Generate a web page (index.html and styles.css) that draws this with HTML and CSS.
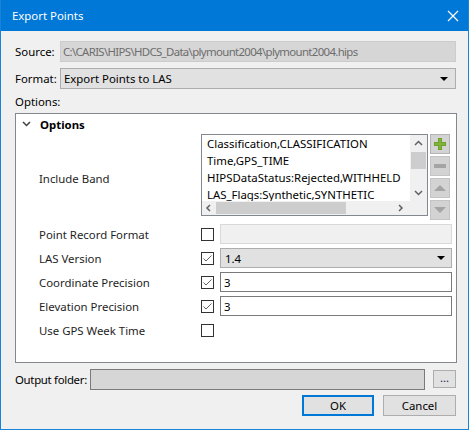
FILE: index.html
```html
<!DOCTYPE html>
<html>
<head>
<meta charset="utf-8">
<link rel="stylesheet" href="styles.css">
</head>
<body>
<div class="window">
  <div class="titlebar">
    <span class="title">Export Points</span>
    <svg class="close" width="12" height="12" viewBox="0 0 12 12"><path d="M1 1 L11 11 M11 1 L1 11" stroke="#fff" stroke-width="1.2" fill="none"/></svg>
  </div>
  <div class="content">
    <div class="row source-row">
      <span class="lbl">Source:</span>
      <div class="field disabled-field">C:\CARIS\HIPS\HDCS_Data\plymount2004\plymount2004.hips</div>
    </div>
    <div class="row format-row">
      <span class="lbl">Format:</span>
      <div class="combo"><span>Export Points to LAS</span><svg width="8" height="4" viewBox="0 0 8 4"><path d="M0 0 H8 L4 4 Z" fill="#000"/></svg></div>
    </div>
    <div class="opt-label">Options:</div>
    <div class="panel">
      <div class="panel-head">
        <svg class="chev" width="9" height="6" viewBox="0 0 9 6"><path d="M1 1 L4.5 4.5 L8 1" stroke="#404040" stroke-width="1.5" fill="none"/></svg>
        <span class="bold">Options</span>
      </div>
      <div class="prop band-row">
        <span class="plbl">Include Band</span>
        <div class="band">
          <div class="listbox">
            <div class="list-main">
              <div class="items">
                <div>Classification,CLASSIFICATION</div>
                <div>Time,GPS_TIME</div>
                <div>HIPSDataStatus:Rejected,WITHHELD</div>
                <div>LAS_Flags:Synthetic,SYNTHETIC</div>
              </div>
              <div class="vscroll">
                <svg width="17" height="17" viewBox="0 0 17 17"><path d="M5 10 L8.5 6.5 L12 10" stroke="#606060" stroke-width="1.5" fill="none"/></svg>
                <div class="vtrack"><div class="vthumb"></div></div>
                <svg width="17" height="17" viewBox="0 0 17 17"><path d="M5 7 L8.5 10.5 L12 7" stroke="#606060" stroke-width="1.5" fill="none"/></svg>
              </div>
            </div>
            <div class="hscroll">
              <svg width="14" height="14" viewBox="0 0 14 14"><path d="M8 4 L5 7 L8 10" stroke="#606060" stroke-width="1.5" fill="none"/></svg>
              <div class="htrack"><div class="hthumb"></div></div>
              <svg width="14" height="14" viewBox="0 0 14 14"><path d="M6 4 L9 7 L6 10" stroke="#606060" stroke-width="1.5" fill="none"/></svg>
              <div class="corner"></div>
            </div>
          </div>
          <div class="sidebtns">
            <div class="sbtn add"><svg width="14" height="14" viewBox="0 0 14 14"><path d="M5 1 H9 V5 H13 V9 H9 V13 H5 V9 H1 V5 H5 Z" fill="#6ea22b"/><path d="M6 2 H8 V6 H12 V8 H8 V12 H6 V8 H2 V6 H6 Z" fill="#7fb33a"/></svg></div>
            <div class="sbtn"><svg width="14" height="14" viewBox="0 0 14 14"><rect x="1" y="5" width="12" height="4" fill="#a4a4a4"/></svg></div>
            <div class="sbtn"><svg width="14" height="14" viewBox="0 0 14 14"><path d="M1 10 L7 4 L13 10 Z" fill="#a4a4a4"/></svg></div>
            <div class="sbtn"><svg width="14" height="14" viewBox="0 0 14 14"><path d="M1 4 L13 4 L7 10 Z" fill="#a4a4a4"/></svg></div>
          </div>
        </div>
      </div>
      <div class="prop">
        <span class="plbl">Point Record Format</span>
        <span class="cb"></span>
        <div class="pfield pdisabled"></div>
      </div>
      <div class="prop">
        <span class="plbl">LAS Version</span>
        <span class="cb checked"><svg width="11" height="11" viewBox="0 0 11 11"><path d="M1.5 5.5 L4 8 L9.5 2.5" stroke="#666" stroke-width="1" fill="none"/></svg></span>
        <div class="pfield pcombo"><span>1.4</span><svg width="8" height="4" viewBox="0 0 8 4"><path d="M0 0 H8 L4 4 Z" fill="#000"/></svg></div>
      </div>
      <div class="prop">
        <span class="plbl">Coordinate Precision</span>
        <span class="cb checked"><svg width="11" height="11" viewBox="0 0 11 11"><path d="M1.5 5.5 L4 8 L9.5 2.5" stroke="#666" stroke-width="1" fill="none"/></svg></span>
        <div class="pfield pedit">3</div>
      </div>
      <div class="prop">
        <span class="plbl">Elevation Precision</span>
        <span class="cb checked"><svg width="11" height="11" viewBox="0 0 11 11"><path d="M1.5 5.5 L4 8 L9.5 2.5" stroke="#666" stroke-width="1" fill="none"/></svg></span>
        <div class="pfield pedit">3</div>
      </div>
      <div class="prop">
        <span class="plbl">Use GPS Week Time</span>
        <span class="cb"></span>
      </div>
    </div>
    <div class="row out-row">
      <span class="lbl out-lbl">Output folder:</span>
      <div class="field out-field"></div>
      <div class="btn dots">...</div>
    </div>
    <div class="actions">
      <div class="btn ok">OK</div>
      <div class="btn cancel">Cancel</div>
    </div>
  </div>
</div>
</body>
</html>
```
FILE: styles.css
```css
* { box-sizing: border-box; }
html, body { margin: 0; padding: 0; background: #ffffff; }
body {
  font-family: "Noto Sans", "Open Sans", sans-serif;
  font-size: 11.4px;
  color: #000;
}
.window {
  width: 469px;
  height: 430px;
  background: #f0f0f0;
  border: 1px solid #1883d7;
  border-top: none;
  display: flex;
  flex-direction: column;
}
.titlebar {
  height: 31px;
  flex: none;
  background: #0078d7;
  color: #fff;
  display: flex;
  align-items: center;
  justify-content: space-between;
  padding: 0 9px 0 11px;
  font-size: 11.4px;
}
.close { display: block; }
.content {
  padding: 10px 12px 0 14px;
  display: flex;
  flex-direction: column;
}
.row { display: flex; align-items: center; flex: none; }
.lbl { width: 45px; flex: none; white-space: nowrap; }
.source-row { height: 21px; }
.field {
  flex: 1;
  height: 21px;
  border: 1px solid #cccccc;
  background: #d6d6d6;
  color: #6d6d6d;
  padding: 0 0 0 2px;
  display: flex;
  align-items: center;
  white-space: nowrap;
  overflow: hidden;
}
.disabled-field { letter-spacing: -0.65px; }
.format-row { height: 21px; margin-top: 6px; }
.combo {
  flex: 1;
  height: 21px;
  border: 1px solid #adadad;
  background: #e1e1e1;
  display: flex;
  align-items: center;
  justify-content: space-between;
  padding: 0 7px 0 3px;
}
.combo svg, .pcombo svg { display: block; }
.opt-label { height: 24px; display: flex; align-items: center; flex: none; }
.panel {
  height: 250px;
  flex: none;
  background: #fff;
  border: 1px solid #828790;
  margin-right: -1px;
  display: flex;
  flex-direction: column;
}
.panel-head { height: 20px; display: flex; align-items: center; padding-left: 6px; flex: none; }
.chev { margin-right: 9px; }
.bold { font-weight: bold; }
.prop {
  display: flex;
  align-items: center;
  height: 20px;
  flex: none;
  margin-bottom: 4px;
  padding-left: 23px;
  padding-right: 4px;
}
.band-row { height: 86px; align-items: flex-start; }
.band-row .plbl { align-self: center; margin-top: 2px; }
.plbl { width: 162px; flex: none; color: #1e1e1e; white-space: nowrap; }
.band { display: flex; flex: 1; }
.listbox {
  width: 227px;
  height: 82px;
  border: 1px solid #828790;
  background: #fff;
  display: flex;
  flex-direction: column;
}
.list-main { flex: 1; display: flex; min-height: 0; }
.items { flex: 1; padding: 0 0 0 5px; line-height: 17px; white-space: nowrap; overflow: hidden; }
.vscroll { width: 17px; background: #f0f0f0; display: flex; flex-direction: column; }
.vscroll svg { display: block; flex: none; }
.vtrack { flex: 1; }
.vthumb { margin: 0 1px; height: 17px; background: #cdcdcd; }
.hscroll { height: 14px; display: flex; background: #f0f0f0; flex: none; }
.hscroll svg { display: block; flex: none; }
.htrack { flex: 1; display: flex; align-items: center; }
.hthumb { width: 130px; height: 12px; background: #cdcdcd; }
.corner { width: 17px; background: #f0f0f0; }
.hscroll > svg:last-of-type { margin-right: 3px; }
.sidebtns { display: flex; flex-direction: column; gap: 2px; margin-left: 2px; }
.sbtn {
  width: 20px;
  height: 20px;
  background: #d3d3d3;
  border: 1px solid #c4c4c4;
  display: flex;
  align-items: center;
  justify-content: center;
}
.sbtn.add { border-color: #b4b4b4; }
.sbtn svg { display: block; }
.cb {
  width: 13px;
  height: 13px;
  border: 1px solid #333;
  background: #fff;
  flex: none;
  margin-right: 6px;
  display: flex;
  align-items: center;
  justify-content: center;
}
.cb svg { display: block; }
.pfield { flex: 1; height: 20px; display: flex; align-items: center; }
.pdisabled { background: #f0f0f0; border: 1px solid #d9d9d9; }
.pcombo { background: #e1e1e1; border: 1px solid #adadad; justify-content: space-between; padding: 0 6px 0 4px; }
.pedit { background: #fff; border: 1px solid #7a7a7a; padding-left: 3px; }
.out-row { margin-top: 6px; height: 21px; }
.out-lbl { width: 75px; letter-spacing: -0.3px; }
.out-field { background: #d6d6d6; border: 1px solid #7a7a7a; height: 21px; }
.btn {
  background: #e1e1e1;
  border: 1px solid #adadad;
  display: flex;
  align-items: center;
  justify-content: center;
  flex: none;
}
.dots { width: 23px; height: 18px; margin-left: 8px; margin-top: -2px; color: #1e1e5a; padding-bottom: 3px; }
.actions { display: flex; justify-content: flex-end; gap: 9px; margin-top: 5px; flex: none; }
.ok { width: 72px; height: 21px; border: 2px solid #0078d7; }
.cancel { width: 73px; height: 21px; }
```
